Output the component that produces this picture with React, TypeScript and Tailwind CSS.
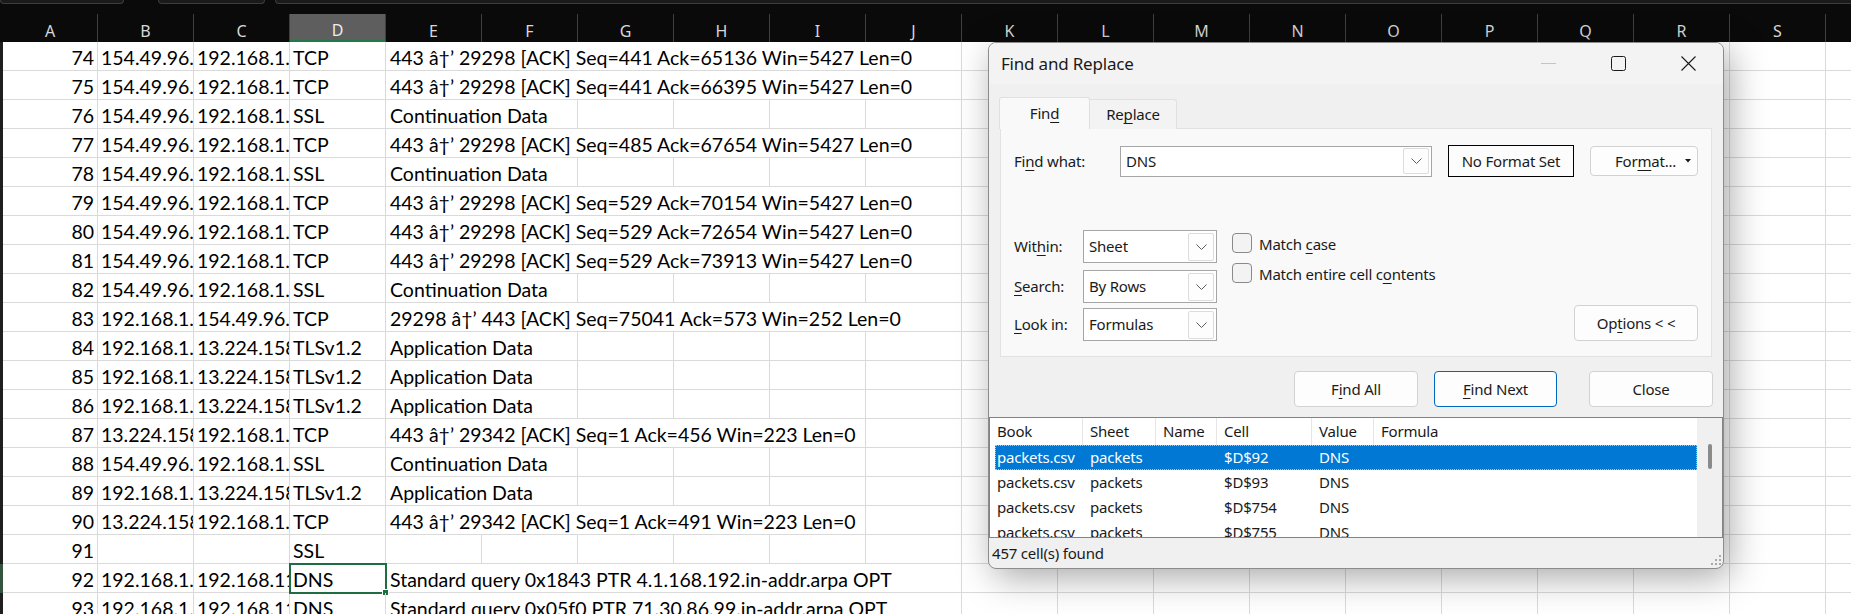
import React from 'react';

const GRID_FONT = "[font-family:Lato,'Liberation_Sans',sans-serif]";
const UI_FONT = "[font-family:'Noto_Sans','Open_Sans',sans-serif]";

const LETTERS = ['A', 'B', 'C', 'D', 'E', 'F', 'G', 'H', 'I', 'J', 'K', 'L', 'M', 'N', 'O', 'P', 'Q', 'R', 'S', 'T'];

type Packet = {
  n: number;
  src: string;
  dst: string;
  proto: string;
  info: string;
  span: 1 | 2 | 5 | 6;
};

// wireshark export, arrow got mangled by the csv encoding
const ack = (from: string, to: string, seq: number, ackNo: number, win: number) =>
  `${from} â†’ ${to} [ACK] Seq=${seq} Ack=${ackNo} Win=${win} Len=0`;

const REMOTE = '154.49.96.10';
const LOCAL = '192.168.1.100';
const CDN = '13.224.158.12';

const packets: Packet[] = [
  { n: 74, src: REMOTE, dst: LOCAL, proto: 'TCP', info: ack('443', '29298', 441, 65136, 5427), span: 6 },
  { n: 75, src: REMOTE, dst: LOCAL, proto: 'TCP', info: ack('443', '29298', 441, 66395, 5427), span: 6 },
  { n: 76, src: REMOTE, dst: LOCAL, proto: 'SSL', info: 'Continuation Data', span: 2 },
  { n: 77, src: REMOTE, dst: LOCAL, proto: 'TCP', info: ack('443', '29298', 485, 67654, 5427), span: 6 },
  { n: 78, src: REMOTE, dst: LOCAL, proto: 'SSL', info: 'Continuation Data', span: 2 },
  { n: 79, src: REMOTE, dst: LOCAL, proto: 'TCP', info: ack('443', '29298', 529, 70154, 5427), span: 6 },
  { n: 80, src: REMOTE, dst: LOCAL, proto: 'TCP', info: ack('443', '29298', 529, 72654, 5427), span: 6 },
  { n: 81, src: REMOTE, dst: LOCAL, proto: 'TCP', info: ack('443', '29298', 529, 73913, 5427), span: 6 },
  { n: 82, src: REMOTE, dst: LOCAL, proto: 'SSL', info: 'Continuation Data', span: 2 },
  { n: 83, src: LOCAL, dst: REMOTE, proto: 'TCP', info: ack('29298', '443', 75041, 573, 252), span: 6 },
  { n: 84, src: LOCAL, dst: CDN, proto: 'TLSv1.2', info: 'Application Data', span: 2 },
  { n: 85, src: LOCAL, dst: CDN, proto: 'TLSv1.2', info: 'Application Data', span: 2 },
  { n: 86, src: LOCAL, dst: CDN, proto: 'TLSv1.2', info: 'Application Data', span: 2 },
  { n: 87, src: CDN, dst: LOCAL, proto: 'TCP', info: ack('443', '29342', 1, 456, 223), span: 5 },
  { n: 88, src: REMOTE, dst: LOCAL, proto: 'SSL', info: 'Continuation Data', span: 2 },
  { n: 89, src: LOCAL, dst: CDN, proto: 'TLSv1.2', info: 'Application Data', span: 2 },
  { n: 90, src: CDN, dst: LOCAL, proto: 'TCP', info: ack('443', '29342', 1, 491, 223), span: 5 },
  { n: 91, src: '', dst: '', proto: 'SSL', info: '', span: 1 },
  { n: 92, src: LOCAL, dst: '192.168.11.1', proto: 'DNS', info: 'Standard query 0x1843 PTR 4.1.168.192.in-addr.arpa OPT', span: 6 },
  { n: 93, src: LOCAL, dst: '192.168.11.1', proto: 'DNS', info: 'Standard query 0x05f0 PTR 71.30.86.99.in-addr.arpa OPT', span: 6 },
];

const spanWidth = { 1: 'w-[96px]', 2: 'w-[192px]', 5: 'w-[480px]', 6: 'w-[576px]' };

const cell =
  'shrink-0 h-full border-r border-b border-[#dadada] overflow-hidden whitespace-nowrap pt-[3px] leading-[25px]';

const results = ['$D$92', '$D$93', '$D$754', '$D$755'];

const Acc = ({ children }: { children: React.ReactNode }) => (
  <span className="underline underline-offset-[3px] decoration-1">{children}</span>
);

const Chevron = () => (
  <svg width="11" height="6" viewBox="0 0 11 6">
    <polyline points="0.5,0.5 5.5,5.5 10.5,0.5" fill="none" stroke="#5c5c5c" strokeWidth="1" />
  </svg>
);

const DropButton = ({ tall }: { tall?: boolean }) => (
  <div
    className={`mr-[2px] w-[26px] ${tall ? 'h-[28px]' : 'h-[26px]'} border border-[#dcdcdc] bg-[#fdfdfd] rounded-[2px] flex items-center justify-center`}
  >
    <Chevron />
  </div>
);

const Select = ({ value }: { value: string }) => (
  <div className="w-[134px] h-[33px] border border-[#a6a6a6] bg-white flex items-center">
    <span className="flex-1 pl-[5px]">{value}</span>
    <DropButton tall />
  </div>
);

const Check = ({ children }: { children: React.ReactNode }) => (
  <div className="flex items-center h-[20px]">
    <div className="w-[20px] h-[20px] rounded-[4px] border border-[#8a8a8a] bg-[#f3f3f3]" />
    <span className="ml-[7px] pt-[2px]">{children}</span>
  </div>
);

const btn =
  'h-[36px] rounded-[4px] border bg-[#fdfdfd] flex items-center justify-center';

function SheetRow({ p }: { p: Packet }) {
  const selected = p.n === 92;
  const empties = LETTERS.slice(4 + p.span);
  return (
    <div className="flex h-[29px]">
      <div className={`w-[3px] shrink-0 ${selected ? 'bg-[#35543f]' : 'bg-[#1f1f1f]'}`} />
      <div className={`${cell} w-[95px] text-right pr-[3px]`}>{p.n}</div>
      <div className={`${cell} w-[96px] pl-[3px]`}>{p.src}</div>
      <div className={`${cell} w-[96px] pl-[3px]`}>{p.dst}</div>
      <div className={`${cell} w-[96px] pl-[3px] relative ${selected ? 'overflow-visible' : ''}`}>
        {p.proto}
        {selected && (
          <div className="absolute -left-[1px] -top-[1px] w-[98px] h-[31px] border-2 border-[#1e6e42]">
            <div className="absolute -right-[4px] -bottom-[4px] w-[7px] h-[7px] bg-[#1e6e42] border border-white" />
          </div>
        )}
      </div>
      <div className={`${cell} ${spanWidth[p.span]} pl-[4px]`}>{p.info}</div>
      {empties.map((l) => (
        <div key={l} className={`${cell} w-[96px]`} />
      ))}
    </div>
  );
}

function Dialog() {
  return (
    <div
      className={`absolute left-[988px] top-[42px] w-[736px] h-[527px] rounded-[8px] border border-[#8c8c8c] bg-[#f0f0f0] overflow-hidden flex flex-col text-[#1a1a1a] text-[15px] tracking-[-0.2px] ${UI_FONT} shadow-[6px_8px_36px_rgba(0,0,0,0.35)]`}
    >
      {/* title bar */}
      <div className="h-[41px] shrink-0 bg-[#f3f3f3] flex items-center">
        <span className="flex-1 pl-[12px] text-[17px]">Find and Replace</span>
        <div className="w-[70px] h-full flex items-center justify-center">
          <div className="w-[15px] h-[1px] bg-[#c4c4c4]" />
        </div>
        <div className="w-[70px] h-full flex items-center justify-center">
          <svg width="15" height="15" viewBox="0 0 15 15">
            <rect x="0.5" y="0.5" width="14" height="14" rx="2" fill="none" stroke="#1a1a1a" strokeWidth="1" />
          </svg>
        </div>
        <div className="w-[70px] h-full flex items-center justify-center">
          <svg width="15" height="15" viewBox="0 0 15 15">
            <path d="M0.5 0.5 L14.5 14.5 M14.5 0.5 L0.5 14.5" stroke="#1a1a1a" strokeWidth="1.1" />
          </svg>
        </div>
      </div>

      {/* tabs */}
      <div className="flex items-end pl-[10px] mt-[13px] h-[32px] relative z-10">
        <div className="w-[91px] h-[32px] bg-[#f9f9f9] border border-b-0 border-[#e0e0e0] rounded-t-[3px] flex items-center justify-center">
          Fin<Acc>d</Acc>
        </div>
        <div className="w-[87px] h-[30px] bg-[#f3f3f3] border border-l-0 border-b-0 border-[#e0e0e0] rounded-tr-[3px] flex items-center justify-center">
          Re<Acc>p</Acc>lace
        </div>
      </div>

      {/* find panel */}
      <div className="ml-[11px] -mt-[1px] w-[712px] h-[229px] shrink-0 border border-[#e2e2e2] bg-[#f9f9f9] flex flex-col">
        <div className="mt-[16px] pl-[13px] h-[32px] flex items-center">
          <span className="w-[106px]">
            Fi<Acc>n</Acc>d what:
          </span>
          <div className="w-[312px] h-[31px] border border-[#a6a6a6] bg-white flex items-center">
            <span className="flex-1 pl-[5px]">DNS</span>
            <DropButton />
          </div>
          <div className="ml-[16px] w-[126px] h-[32px] border border-black bg-[#fcfcfc] flex items-center justify-center">
            No Format Set
          </div>
          <div className="ml-[16px] w-[108px] h-[30px] rounded-[4px] border border-[#d2d2d2] bg-[#fdfdfd] flex items-center">
            <span className="pl-[24px] flex-1">
              For<Acc>m</Acc>at...
            </span>
            <svg width="6" height="4" viewBox="0 0 6 4" className="mr-[6px]">
              <polygon points="0,0 6,0 3,3.5" fill="#1a1a1a" />
            </svg>
          </div>
        </div>

        <div className="mt-[53px] pl-[13px] pr-[13px] flex">
          <div className="flex flex-col">
            <div className="flex items-center">
              <span className="w-[69px]">
                Wit<Acc>h</Acc>in:
              </span>
              <Select value="Sheet" />
            </div>
            <div className="flex items-center mt-[7px]">
              <span className="w-[69px]">
                <Acc>S</Acc>earch:
              </span>
              <Select value="By Rows" />
            </div>
            <div className="flex items-center mt-[5px]">
              <span className="w-[69px]">
                <Acc>L</Acc>ook in:
              </span>
              <Select value="Formulas" />
            </div>
          </div>

          <div className="ml-[15px] mt-[3px] flex flex-col gap-[10px]">
            <Check>
              Match <Acc>c</Acc>ase
            </Check>
            <Check>
              Match entire cell c<Acc>o</Acc>ntents
            </Check>
          </div>

          <div className={`${btn} ml-auto self-end w-[124px] border-[#d2d2d2]`}>
            Op<Acc>t</Acc>ions &lt; &lt;
          </div>
        </div>
      </div>

      {/* action buttons */}
      <div className="mt-[14px] pr-[10px] flex justify-end shrink-0">
        <div className={`${btn} w-[124px] border-[#d2d2d2]`}>
          F<Acc>i</Acc>nd All
        </div>
        <div className={`${btn} ml-[16px] w-[123px] border-[#0067c0]`}>
          <Acc>F</Acc>ind Next
        </div>
        <div className={`${btn} ml-[32px] w-[124px] border-[#d2d2d2]`}>Close</div>
      </div>

      {/* results list */}
      <div className="mt-[10px] h-[121px] shrink-0 border border-[#838383] bg-white flex overflow-hidden">
        <div className="flex-1 flex flex-col">
          <div className="h-[27px] shrink-0 flex items-center">
            <div className="w-[93px] h-full pl-[7px] flex items-center border-r border-[#e6e6e6]">Book</div>
            <div className="w-[73px] h-full pl-[7px] flex items-center border-r border-[#e6e6e6]">Sheet</div>
            <div className="w-[61px] h-full pl-[7px] flex items-center border-r border-[#e6e6e6]">Name</div>
            <div className="w-[95px] h-full pl-[7px] flex items-center border-r border-[#e6e6e6]">Cell</div>
            <div className="w-[62px] h-full pl-[7px] flex items-center border-r border-[#e6e6e6]">Value</div>
            <div className="flex-1 h-full pl-[7px] flex items-center">Formula</div>
          </div>
          {results.map((ref, i) => (
            <div
              key={ref}
              className={`ml-[5px] h-[25px] shrink-0 flex items-center ${
                i === 0
                  ? 'bg-[#0078d4] text-white outline-1 outline-dotted -outline-offset-1 outline-[#9ccbf0]'
                  : ''
              }`}
            >
              <div className="w-[88px] pl-[2px]">packets.csv</div>
              <div className="w-[73px] pl-[7px]">packets</div>
              <div className="w-[61px]" />
              <div className="w-[95px] pl-[7px]">{ref}</div>
              <div className="w-[62px] pl-[7px]">DNS</div>
            </div>
          ))}
        </div>
        <div className="w-[25px] bg-[#f0f0f0] flex justify-center">
          <div className="mt-[26px] w-[4px] h-[25px] rounded-full bg-[#8a8a8a]" />
        </div>
      </div>

      {/* status */}
      <div className="flex-1 flex items-center pl-[3px]">
        <span className="flex-1">457 cell(s) found</span>
        <svg width="10" height="10" viewBox="0 0 10 10" className="self-end mb-[3px] mr-[2px]">
          <rect x="8" y="0" width="2" height="2" fill="#a8a8a8" />
          <rect x="4" y="4" width="2" height="2" fill="#a8a8a8" />
          <rect x="8" y="4" width="2" height="2" fill="#a8a8a8" />
          <rect x="0" y="8" width="2" height="2" fill="#a8a8a8" />
          <rect x="4" y="8" width="2" height="2" fill="#a8a8a8" />
          <rect x="8" y="8" width="2" height="2" fill="#a8a8a8" />
        </svg>
      </div>
    </div>
  );
}

export default function App() {
  return (
    <div className="relative w-[1851px] h-[614px] overflow-hidden bg-white">
      {/* top of ribbon / formula bar */}
      <div className="h-[14px] bg-[#0a0a0a] flex items-start">
        <div className="w-[124px] h-[4px] border-x border-b border-[#3c3c3c] rounded-b-[4px] bg-[#1a1a1a]" />
        <div className="ml-[34px] w-[107px] h-[4px] border-x border-b border-[#3c3c3c] rounded-b-[4px] bg-[#1a1a1a]" />
        <div className="ml-[10px] flex-1 h-[4px] border-l border-b border-[#3c3c3c] rounded-bl-[4px] bg-[#1a1a1a]" />
      </div>

      {/* column headers */}
      <div className={`flex h-[28px] bg-[#0a0a0a] ${UI_FONT}`}>
        <div className="w-[3px] shrink-0" />
        {LETTERS.map((l, i) => (
          <div
            key={l}
            className={`${i === 0 ? 'w-[95px]' : 'w-[96px]'} shrink-0 h-full border-r border-[#3f3f3f] flex items-center justify-center pt-[5px] text-[16px] ${
              l === 'D' ? 'bg-[#5e5e5e] text-[#ececec] border-b-2 border-b-[#1e7a47]' : 'text-[#d8d8d8]'
            }`}
          >
            {l}
          </div>
        ))}
      </div>

      <div className={`${GRID_FONT} text-[19.5px] text-black`}>
        {packets.map((p) => (
          <SheetRow key={p.n} p={p} />
        ))}
      </div>

      <Dialog />
    </div>
  );
}
